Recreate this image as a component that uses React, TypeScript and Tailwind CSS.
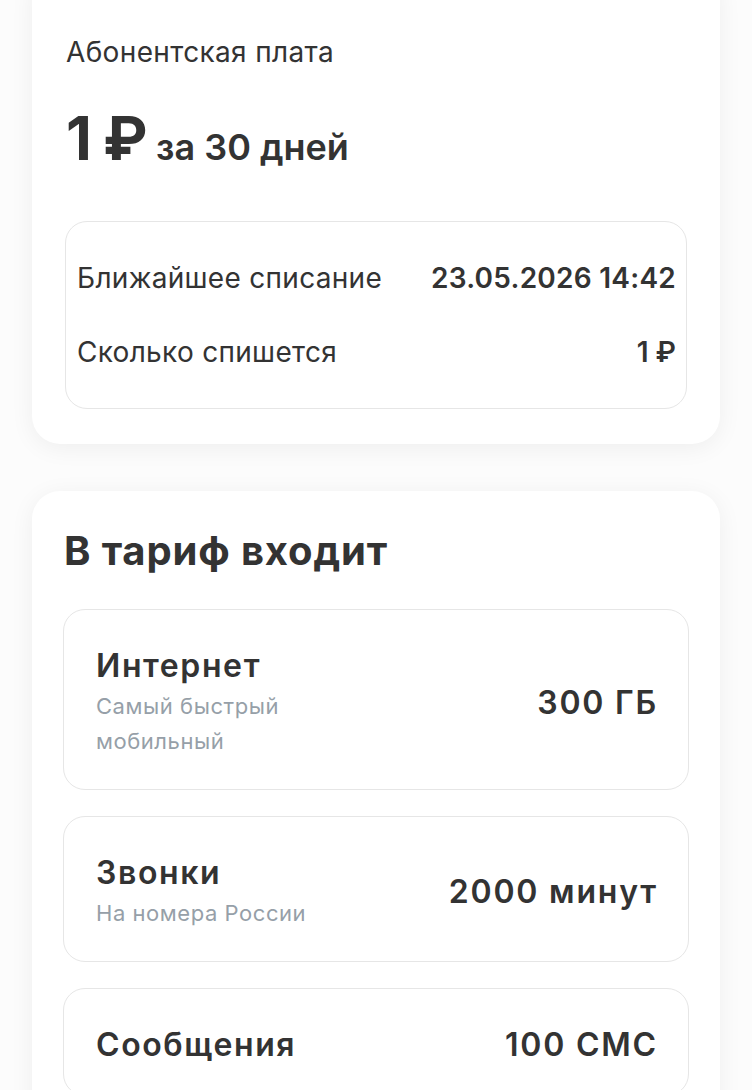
import React from 'react';

interface TariffItem {
  title: string;
  subtitle?: string;
  value: string;
}

const items: TariffItem[] = [
  { title: 'Интернет', subtitle: 'Самый быстрый мобильный', value: '300 ГБ' },
  { title: 'Звонки', subtitle: 'На номера России', value: '2000 минут' },
  { title: 'Сообщения', value: '100 СМС' },
];

const App: React.FC = () => {
  return (
    <div
      className="min-h-screen bg-[#fcfcfc] text-[#333333] overflow-hidden"
      style={{ fontFamily: 'Inter, Roboto, "Noto Sans", sans-serif' }}
    >
      <div className="px-[32px] flex flex-col gap-[47px] pb-10">
        {/* Абонентская плата */}
        <div className="-mt-[30px] bg-white rounded-[28px] shadow-[0_4px_24px_rgba(0,0,0,0.06)] px-[33px] pt-[64px] pb-[35px]">
          <p className="text-[28px] leading-[36px] ml-[1px] tracking-[0.35px]">Абонентская плата</p>
          <div className="mt-[38px] flex items-baseline gap-[10px] ml-[1px]">
            <span className="text-[60px] leading-[60px] font-bold tracking-[-1.5px]">1 ₽</span>
            <span className="text-[36px] leading-[40px] font-semibold">за 30 дней</span>
          </div>
          <div className="mt-[53px] border border-[#e6e6e6] rounded-[22px] pl-[11px] pr-[10px] py-[38px] flex flex-col gap-[38px]">
            <div className="flex items-center justify-between leading-[36px]">
              <span className="text-[28px] tracking-[0.3px]">Ближайшее списание</span>
              <span className="text-[28px] font-semibold tracking-[0.25px]">23.05.2026 14:42</span>
            </div>
            <div className="flex items-center justify-between leading-[36px]">
              <span className="text-[28px] tracking-[0.3px]">Сколько спишется</span>
              <span className="text-[28px] font-semibold">1 ₽</span>
            </div>
          </div>
        </div>

        {/* В тариф входит */}
        <div className="bg-white rounded-[28px] shadow-[0_4px_24px_rgba(0,0,0,0.06)] px-[31px] pt-[36px] pb-[32px]">
          <h2 className="text-[40px] leading-[48px] font-bold ml-[1px] tracking-[0.85px]">В тариф входит</h2>
          <div className="mt-[34px] flex flex-col gap-[26px]">
            {items.map(item => (
              <div
                key={item.title}
                className="border border-[#e6e6e6] rounded-[22px] pl-[32px] pr-[30px] pt-[36px] pb-[30px] flex items-center justify-between"
              >
                <div className="max-w-[240px]">
                  <p className="text-[32px] leading-[40px] font-semibold tracking-[1.6px]">{item.title}</p>
                  {item.subtitle && (
                    <p className="mt-[3px] text-[22px] leading-[35px] text-[#969fa8] tracking-[0.55px]">
                      {item.subtitle}
                    </p>
                  )}
                </div>
                <span className="text-[32px] leading-[40px] font-semibold tracking-[1.8px]">{item.value}</span>
              </div>
            ))}
          </div>
        </div>
      </div>
    </div>
  );
};

export default App;
